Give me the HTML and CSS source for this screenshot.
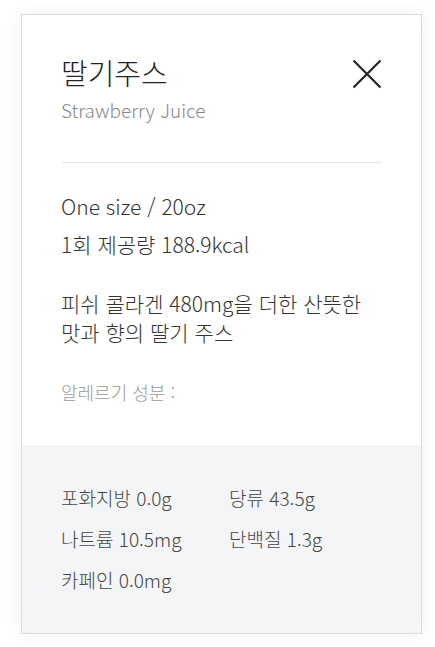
FILE: index.html
```html
<!DOCTYPE html>
<html lang="ko">
<head>
<meta charset="utf-8">
<link rel="stylesheet" href="styles.css">
</head>
<body>
<div class="card">
  <div class="main">
    <div class="header">
      <div class="names">
        <h1 class="title">딸기주스</h1>
        <p class="subtitle">Strawberry Juice</p>
      </div>
      <button class="close" aria-label="닫기">
        <svg width="30" height="30" viewBox="0 0 30 30"><path d="M1.5 1.5 L28.5 28.5 M28.5 1.5 L1.5 28.5" stroke="#222" stroke-width="2.2" fill="none"/></svg>
      </button>
    </div>
    <hr class="divider">
    <p class="spec">One size / 20oz</p>
    <p class="spec">1회 제공량 188.9kcal</p>
    <p class="desc">피쉬 콜라겐 480mg을 더한 산뜻한<br>맛과 향의 딸기 주스</p>
    <p class="allergy">알레르기 성분 :</p>
  </div>
  <div class="nutrition">
    <div class="nut">포화지방 0.0g</div>
    <div class="nut">당류 43.5g</div>
    <div class="nut">나트륨 10.5mg</div>
    <div class="nut">단백질 1.3g</div>
    <div class="nut">카페인 0.0mg</div>
  </div>
</div>
</body>
</html>
```

FILE: styles.css
```css
html, body {
  margin: 0;
  background: #fff;
}
body {
  padding: 14px 13px 12px 21px;
  font-family: "Noto Sans CJK KR", "Noto Sans", sans-serif;
  font-weight: 300;
  color: #222;
}
.card {
  border: 1px solid #dcdcdc;
  background: #fff;
  box-shadow: 0 0 18px rgba(0,0,0,0.06);
  height: 618px;
  display: flex;
  flex-direction: column;
}
.main {
  padding: 39px 39px 0 39px;
  height: 430px;
  box-sizing: border-box;
}
.header {
  display: flex;
  justify-content: space-between;
  align-items: flex-start;
}
.title {
  margin: 0;
  font-size: 29px;
  font-weight: 300;
  line-height: 36px;
  color: #222;
}
.subtitle {
  margin: 7px 0 0;
  font-size: 19px;
  font-weight: 300;
  line-height: 26px;
  color: #888;
}
.close {
  border: 0;
  background: none;
  padding: 0;
  margin: 5px 0 0;
  width: 30px;
  height: 30px;
  cursor: pointer;
}
.close svg { display: block; }
.divider {
  border: 0;
  border-top: 1px solid #e5e5e5;
  margin: 39px 0 0 1px;
}
.spec {
  margin: 0;
  font-size: 21px;
  font-weight: 300;
  line-height: 38px;
  color: #333;
}
.divider + .spec { margin-top: 24px; }
.desc {
  margin: 26px 0 0;
  font-size: 21px;
  font-weight: 300;
  line-height: 29px;
  color: #333;
}
.allergy {
  margin: 32px 0 0;
  font-size: 18px;
  font-weight: 300;
  line-height: 26px;
  color: #999;
}
.nutrition {
  flex: 1;
  background: #f4f5f7;
  display: grid;
  grid-template-columns: 168px 1fr;
  grid-auto-rows: 41px;
  align-content: start;
  padding: 32px 39px 0;
  font-size: 19px;
  font-weight: 300;
  color: #444;
}
.nut {
  line-height: 41px;
}
```
